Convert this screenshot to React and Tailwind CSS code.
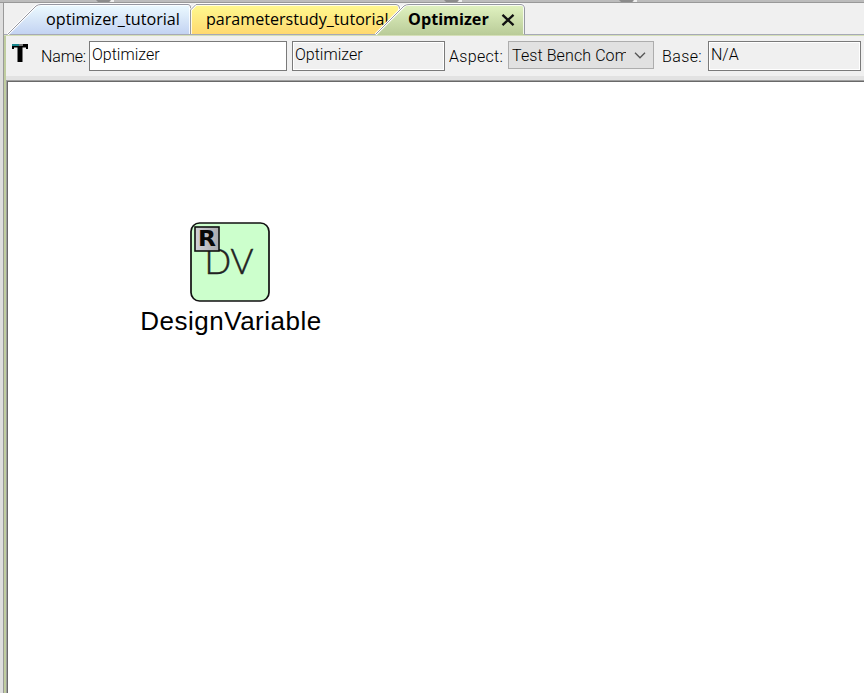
import React from "react";

const tabFont = "font-['Open_Sans','Noto_Sans',sans-serif]";

function Tab({ className, textClass, width, shape, outline, id, from, to, children }) {
  return (
    <div className={`relative h-[32px] shrink-0 ${className}`}>
      <svg className="absolute inset-0" width={width} height="32">
        <defs>
          <linearGradient id={id} x1="0" y1="0" x2="0" y2="1">
            <stop offset="0" stopColor={from} />
            <stop offset="1" stopColor={to} />
          </linearGradient>
        </defs>
        <path d={shape} fill={`url(#${id})`} />
        <path d={outline} fill="none" stroke="#fff" strokeWidth="2.6" />
        <path d={outline} fill="none" stroke="#9698a2" />
      </svg>
      <span className={`relative block whitespace-nowrap leading-[32px] text-black ${tabFont} ${textClass}`}>{children}</span>
    </div>
  );
}

function Field({ className, children }) {
  return (
    <div className={`h-[30px] shrink-0 border border-[#7a7a7a] pl-[2px] leading-[26px] shadow-[inset_0_0_0_1px_#fff] ${className}`}>
      {children}
    </div>
  );
}

function DesignVariable() {
  return (
    <div className="absolute left-[131px] top-[140px] flex w-[182px] flex-col items-center">
      <svg width="80" height="80" viewBox="0 0 80 80" className="-ml-[1px]">
        <rect x="1" y="1" width="78" height="78" rx="8.5" fill="#ccffcc" stroke="#111" strokeWidth="1.7" />
        <text x="14.5" y="52" fontFamily="Lato, sans-serif" fontWeight="300" fontSize="35" textLength="49" fill="#222" stroke="#222" strokeWidth="0.5">DV</text>
        <defs>
          <linearGradient id="ref" x1="0" y1="0" x2="1" y2="0">
            <stop offset="0" stopColor="#d2d2d8" />
            <stop offset="1" stopColor="#a9a9ad" />
          </linearGradient>
        </defs>
        <rect x="5" y="5" width="24" height="24" fill="url(#ref)" stroke="#111" strokeWidth="1.6" />
        <text x="8" y="24" fontFamily="DejaVu Sans, sans-serif" fontWeight="700" fontSize="22" textLength="18" lengthAdjust="spacingAndGlyphs" fill="#080808">R</text>
      </svg>
      <div className="ml-[2px] mt-[4px] whitespace-nowrap font-['Liberation_Sans',sans-serif] text-[26px] leading-[30px] tracking-[0.5px] text-black">DesignVariable</div>
    </div>
  );
}

export default function App() {
  return (
    <div className="flex h-[693px] w-[864px] flex-col overflow-hidden bg-[#f0f0f0]">
      <div className="relative h-[3px] shrink-0 border-b border-[#999] bg-[#bcbcbc]">
        <svg className="absolute inset-0" width="864" height="2" fill="#8c8c8c">
          <path d="M96 0h15l-2 2H98zM444 0h15l-2 2h-11zM619 0h15l-2 2h-11z" />
          <path d="M111 0h3v2h-4zM459 0h3v2h-4zM634 0h3v2h-4z" fill="#eee" />
        </svg>
      </div>
      <div className="flex min-h-0 flex-1">
        <div className="w-[4px] shrink-0 border-r border-[#999] bg-[#dedede]" />
        <div className="flex min-w-0 flex-1 flex-col">
          <div className="flex h-[32px] shrink-0 border-b border-[#a6a9b6] pl-[3px]">
            <Tab id="blue" className="w-[183px]" width="184" from="#edfbff" to="#c3d3f2" textClass="pl-[39px] text-[16.2px]" shape="M0 31L29 2Q31 1 34 1H181Q183 1 183 4V31Z" outline="M.5 31.5L29 3Q31 1.5 34 1.5H181Q183.5 1.5 183.5 4V31">optimizer_tutorial</Tab>
            <Tab id="yellow" className="w-[212px]" width="212" from="#fffa90" to="#ffd970" textClass="pl-[16px] text-[16.1px]" shape="M1 31V7L6 1H207Q210 1 210 4V31Z" outline="M.5 31V7L6 1.5H206Q209.5 1.5 209.5 5V31">parameterstudy_tutorial</Tab>
            <Tab id="green" className="-ml-[27px] w-[150px]" width="150" from="#e2f4c2" to="#b9cb98" textClass="pl-[33px] text-[16.2px] font-bold" shape="M0 32L29 2Q31 1 34 1H146Q149 1 149 4V32Z" outline="M.5 31.5L29 3Q31 1.5 34 1.5H146Q149.5 1.5 149.5 5V31">
              Optimizer
              <svg className="absolute left-[126px] top-[11px]" width="14" height="12">
                <path d="M1.500 .8L12.500 11.2M12.500 .8L1.500 11.2" stroke="#111" strokeWidth="2.3" />
              </svg>
            </Tab>
          </div>
          <div className="flex min-h-0 flex-1 border-t border-[#d5dfb8]">
            <div className="w-[2px] shrink-0 bg-[#c0cda0]" />
            <div className="flex min-w-0 flex-1 flex-col">
              <div className="flex h-[40px] shrink-0 pt-[5px] font-['Roboto',sans-serif] text-[16px] font-light text-black">
                <svg className="ml-[6px] mt-[3px] shrink-0" width="16" height="18">
                  <path d="M0 0H16V5H14V3.500H10.500V18H5.500V3.500H2V5H0Z" fill="#000" />
                  <path d="M0 0H7V2H0Z" fill="#18858c" />
                  <path d="M7 0H11V2H7Z" fill="#777" />
                </svg>
                <span className="ml-[13px] w-[48px] shrink-0 leading-[32px] tracking-[-0.15px]">Name:</span>
                <Field className="w-[198px] bg-white">Optimizer</Field>
                <Field className="ml-[5px] w-[153px]">Optimizer</Field>
                <span className="ml-[4px] w-[59px] shrink-0 leading-[32px] tracking-[0.3px]">Aspect:</span>
                <div className="flex h-[28px] w-[146px] shrink-0 border border-[#adadad] bg-[#e1e1e1] pl-[3px] leading-[27px]">
                  <span className="w-[114px] overflow-hidden whitespace-nowrap tracking-[0.1px]">Test Bench Com</span>
                  <svg className="ml-[8px] mt-[10px]" width="12" height="7">
                    <path d="M1 .8L6 5.800L11 .8" fill="none" stroke="#555" strokeWidth="1.3" />
                  </svg>
                </div>
                <span className="ml-[8px] w-[46px] shrink-0 leading-[32px] tracking-[0.4px]">Base:</span>
                <Field className="w-[153px]">N/A</Field>
              </div>
              <div className="h-[4px] shrink-0 bg-[#e2e2e2]" />
              <div className="flex-1 border-l border-t border-[#a0a0a0]">
                <div className="relative h-full border-l border-t border-[#696969] bg-white">
                  <DesignVariable />
                </div>
              </div>
            </div>
          </div>
        </div>
      </div>
    </div>
  );
}
